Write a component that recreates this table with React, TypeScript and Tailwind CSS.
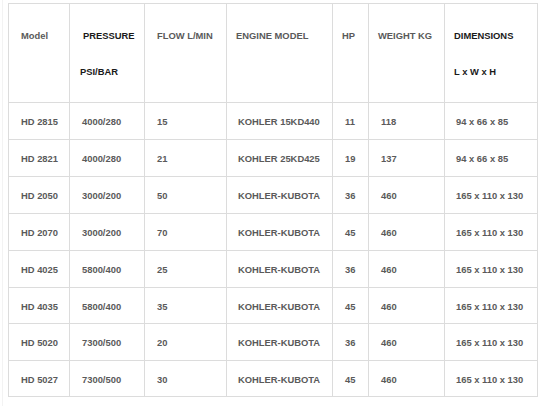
import React from "react";

const rows = [
  ["HD 2815", "4000/280", "15", "KOHLER 15KD440", "11", "118", "94 x 66 x 85"],
  ["HD 2821", "4000/280", "21", "KOHLER 25KD425", "19", "137", "94 x 66 x 85"],
  ["HD 2050", "3000/200", "50", "KOHLER-KUBOTA", "36", "460", "165 x 110 x 130"],
  ["HD 2070", "3000/200", "70", "KOHLER-KUBOTA", "45", "460", "165 x 110 x 130"],
  ["HD 4025", "5800/400", "25", "KOHLER-KUBOTA", "36", "460", "165 x 110 x 130"],
  ["HD 4035", "5800/400", "35", "KOHLER-KUBOTA", "45", "460", "165 x 110 x 130"],
  ["HD 5020", "7300/500", "20", "KOHLER-KUBOTA", "36", "460", "165 x 110 x 130"],
  ["HD 5027", "7300/500", "30", "KOHLER-KUBOTA", "45", "460", "165 x 110 x 130"],
];

const rowH = ["h-[37px]", "h-[37px]", "h-[37px]", "h-[37px]", "h-[37px]", "h-[36px]", "h-[37px]", "h-[36px]"];
const dataPad = ["pl-[12px]", "pl-[12px]", "pl-[12px]", "pl-[11px]", "pl-[12px]", "pl-[12px]", "pl-[11px]"];

export default function App() {
  return (
    <div className="w-[541px] h-[406px] bg-white overflow-hidden" style={{ fontFamily: '"Liberation Sans", Arial, sans-serif' }}>
      <div className="ml-[2px] h-full border-l border-[#f3f3f3] pl-[5px] pt-[3px]">
        <table className="border-collapse table-fixed w-[529px] text-[9.4px] font-bold text-[#5a5a5a]">
          <colgroup>
            <col className="w-[61px]" />
            <col className="w-[75px]" />
            <col className="w-[82px]" />
            <col className="w-[106px]" />
            <col className="w-[36px]" />
            <col className="w-[76px]" />
            <col className="w-[93px]" />
          </colgroup>
          <thead>
            <tr className="h-[99px]">
              <th className="border border-[#dcdcdc] align-top text-left font-bold pl-[12px] pt-[26px] leading-[12px]">Model</th>
              <th className="border border-[#dcdcdc] align-top text-left font-bold pl-[10px] pt-[26px] leading-[12px] text-[#1a1a1a]">
                <div className="pl-[3px]">PRESSURE</div>
                <div className="mt-[24px]">PSI/BAR</div>
              </th>
              <th className="border border-[#dcdcdc] align-top text-left font-bold pl-[12px] pt-[26px] leading-[12px]">FLOW L/MIN</th>
              <th className="border border-[#dcdcdc] align-top text-left font-bold pl-[9px] pt-[26px] leading-[12px]">ENGINE MODEL</th>
              <th className="border border-[#dcdcdc] align-top text-left font-bold pl-[9px] pt-[26px] leading-[12px]">HP</th>
              <th className="border border-[#dcdcdc] align-top text-left font-bold pl-[9px] pt-[26px] leading-[12px]">WEIGHT KG</th>
              <th className="border border-[#dcdcdc] align-top text-left font-bold pl-[9px] pt-[26px] leading-[12px] text-[#1a1a1a]">
                <div>DIMENSIONS</div>
                <div className="mt-[24px]">L x W x H</div>
              </th>
            </tr>
          </thead>
          <tbody>
            {rows.map((r, i) => (
              <tr key={i} className={rowH[i]}>
                {r.map((c, j) => (
                  <td key={j} className={`border border-[#dcdcdc] align-middle pt-[2px] leading-[12px] ${dataPad[j]}`}>
                    {c}
                  </td>
                ))}
              </tr>
            ))}
          </tbody>
        </table>
      </div>
    </div>
  );
}
